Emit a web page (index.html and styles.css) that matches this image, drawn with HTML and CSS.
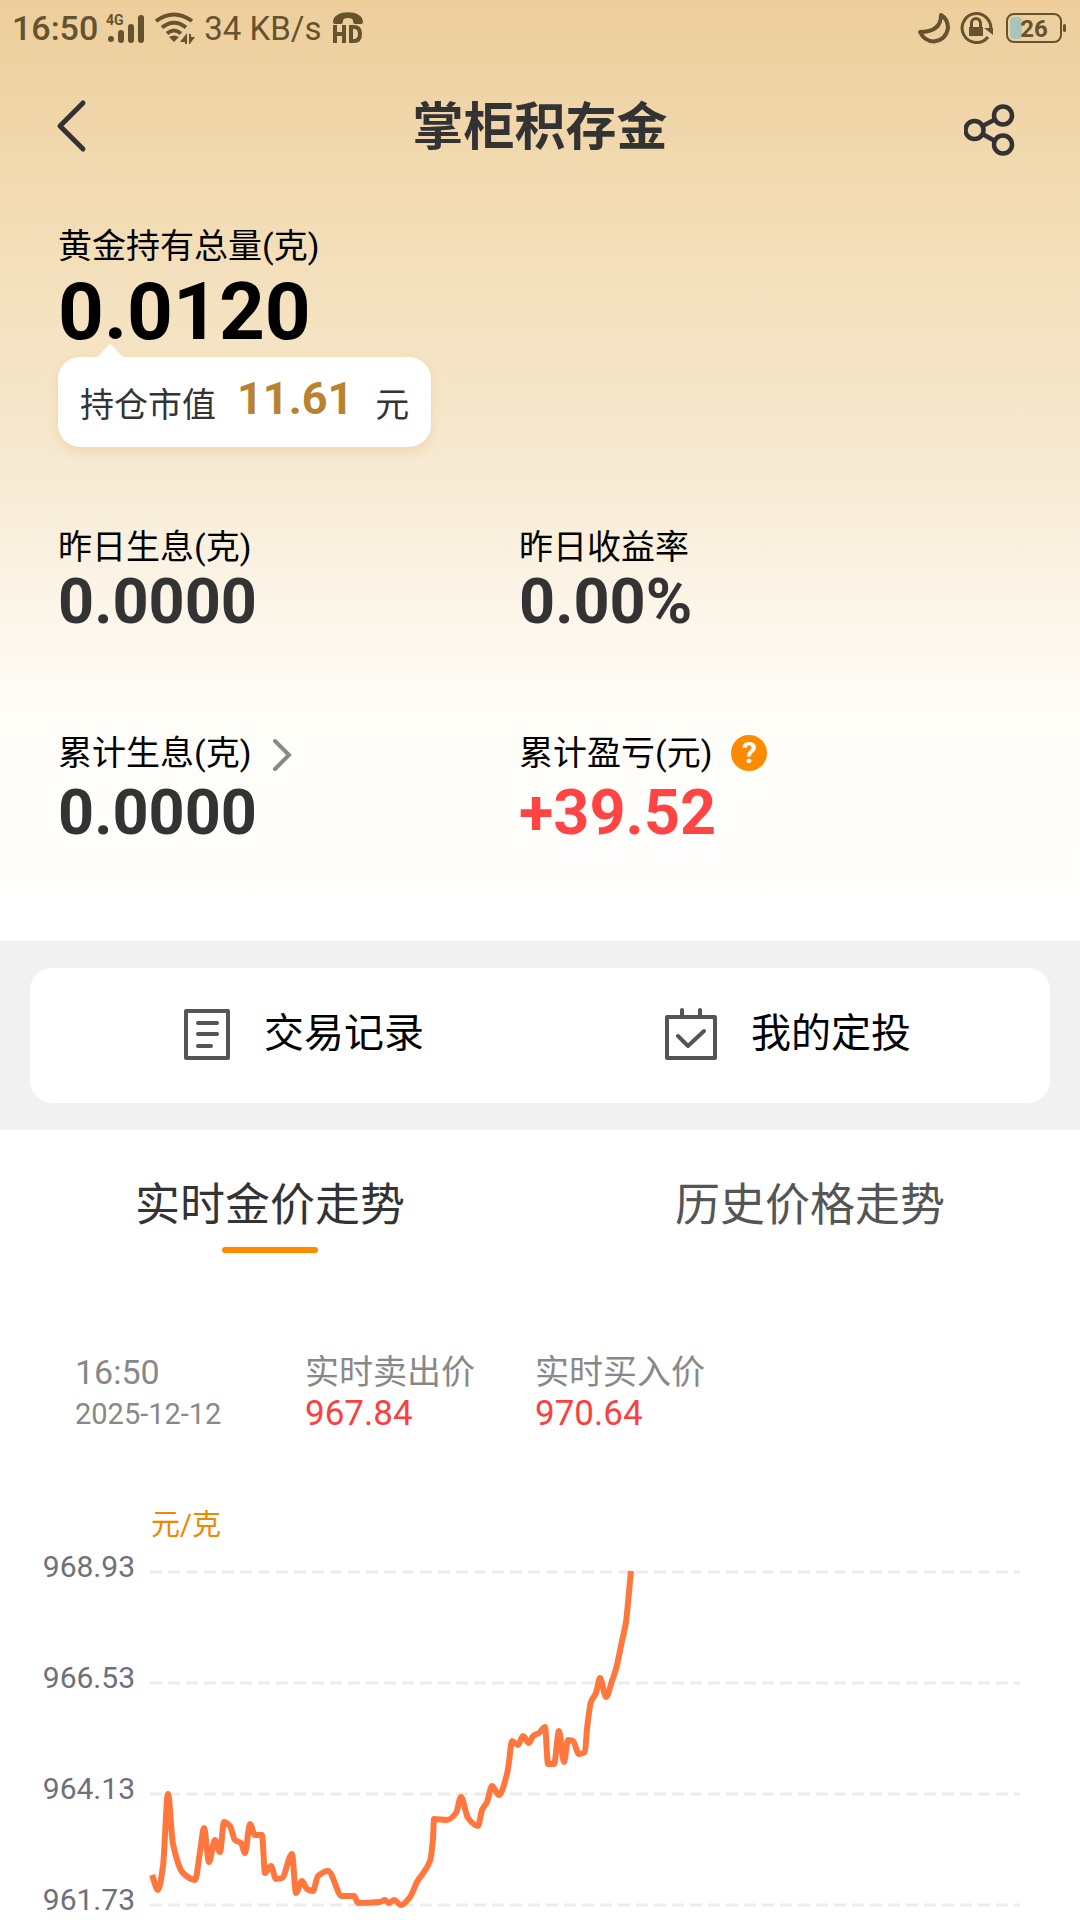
FILE: index.html
```html
<!DOCTYPE html>
<html lang="zh-CN">
<head>
  <meta charset="UTF-8">
  <meta name="viewport" content="width=device-width, initial-scale=1">
  <title>掌柜积存金</title>
  <link rel="stylesheet" href="styles.css">
</head>
<body>

  <div class="hero">
    <!-- Phone status bar -->
    <div class="status-bar">
      <span class="status-time">16:50</span>
      <svg class="signal-icon" width="40" height="32" viewBox="0 0 40 32">
        <text x="0" y="13" class="net-type">4G</text>
        <g fill="#65522f">
          <circle cx="5" cy="27" r="3"/>
          <rect x="12" y="18" width="6" height="13" rx="3"/>
          <rect x="22" y="12" width="6" height="19" rx="3"/>
          <rect x="32" y="3" width="6" height="28" rx="3"/>
        </g>
      </svg>
      <svg class="wifi-icon" width="42" height="32" viewBox="0 0 42 32" fill="none" stroke="#65522f" stroke-width="4">
        <path d="M2 9Q20 -4 38 9"/>
        <path d="M8 15.500Q20 6 32 15.500"/>
        <path d="M13 21.500Q20 15.500 27 21.500"/>
        <path d="M15 25Q20 22 25 25L20 30Z" fill="#65522f" stroke="none"/>
        <path d="M26 30L33 21V33H31V30ZM35 22V33L41 25H37V22Z" fill="#65522f" stroke="none"/>
      </svg>
      <span class="status-speed">34 KB/s</span>
      <svg class="hd-icon" width="32" height="34" viewBox="0 0 32 34">
        <path d="M1 11C1 -2 31 -2 31 11Q31 13 29 13H23Q21 13 21 10Q21 7 16 7T11 10Q11 13 9 13H3Q1 13 1 11Z" fill="#65522f"/>
        <path d="M3 14V32M12 14V32M3 23H12M19 16H22Q28 16 28 23T22 30H19Z" fill="none" stroke="#65522f" stroke-width="4"/>
      </svg>
      <div class="status-right">
        <svg width="34" height="32" viewBox="0 0 34 32" fill="none" stroke="#65522f" stroke-width="4" stroke-linejoin="round">
          <path d="M25 3Q32 7 32 16Q30 28 18 29.500Q8 29 4 20Q25 20 25 3Z"/>
        </svg>
        <svg width="34" height="34" viewBox="0 0 34 34" fill="none" stroke="#65522f" stroke-width="3">
          <path d="M30.500 20A14.500 14.500 0 0 0 16 2.500A14.500 14.500 0 1 0 28 26"/>
          <path d="M24 17H33V24Z" fill="#65522f" stroke="none"/>
          <rect x="9" y="16" width="14" height="9" fill="#65522f" stroke="none"/>
          <path d="M11.500 17V12A4.500 4.500 0 0 1 20.500 12V17"/>
        </svg>
        <span class="battery"><span class="battery-level"></span><span class="battery-text">26</span></span>
      </div>
    </div>

    <!-- Title bar -->
    <header class="title-bar">
      <button class="icon-btn" aria-label="返回">
        <svg width="32" height="54" viewBox="0 0 32 54" fill="none" stroke="#333" stroke-width="5" stroke-linecap="round" stroke-linejoin="round">
          <path d="M27 4L4 27L27 50"/>
        </svg>
      </button>
      <h1>掌柜积存金</h1>
      <button class="icon-btn" aria-label="分享">
        <svg width="52" height="60" viewBox="0 -8 52 60" fill="none" stroke="#333" stroke-width="4.500">
          <circle cx="10.500" cy="26" r="9"/>
          <circle cx="39" cy="11.500" r="9"/>
          <circle cx="39" cy="40.500" r="9"/>
          <path d="M18.500 22L31 15.500M18.500 30L31 37"/>
        </svg>
      </button>
    </header>

    <section class="holdings">
      <p class="label">黄金持有总量(克)</p>
      <p class="total">0.0120</p>
      <p class="market-value">持仓市值<strong>11.61</strong>元</p>

      <div class="stats">
        <div class="stat">
          <p class="label">昨日生息(克)</p>
          <p class="value">0.0000</p>
        </div>
        <div class="stat">
          <p class="label">昨日收益率</p>
          <p class="value">0.00%</p>
        </div>
      </div>
      <div class="stats stats-total">
        <div class="stat">
          <a href="#" class="label">累计生息(克)
            <svg class="more-icon" width="20" height="38" viewBox="0 -4 20 38" fill="none" stroke="#888" stroke-width="4" stroke-linecap="round">
              <path d="M3 3L17 17L3 31"/>
            </svg>
          </a>
          <p class="value">0.0000</p>
        </div>
        <div class="stat">
          <p class="label">累计盈亏(元)
            <button class="help-btn" aria-label="说明">?</button>
          </p>
          <p class="value up">+39.52</p>
        </div>
      </div>
    </section>
  </div>

  <nav class="shortcuts">
    <div class="shortcut-card">
      <a href="#">
        <svg width="46" height="52" viewBox="0 0 46 52" fill="none" stroke="#555" stroke-width="4" stroke-linecap="round" stroke-linejoin="round">
          <rect x="2" y="3" width="42" height="47"/>
          <path d="M14 15H33M14 26H33M14 38H27"/>
        </svg>
        <span>交易记录</span>
      </a>
      <a href="#">
        <svg width="52" height="52" viewBox="0 0 52 52" fill="none" stroke="#555" stroke-width="4" stroke-linecap="round" stroke-linejoin="round">
          <rect x="2" y="9" width="48" height="41"/>
          <path d="M17 2V9M35 2V9M13 28L23 38L39 23"/>
        </svg>
        <span>我的定投</span>
      </a>
    </div>
  </nav>

  <main>
    <div class="tabs" role="tablist">
      <button class="tab active" role="tab" aria-selected="true">实时金价走势</button>
      <button class="tab" role="tab" aria-selected="false">历史价格走势</button>
    </div>

    <div class="quotes">
      <div>
        <p class="quote-title">16:50</p>
        <p class="quote-date">2025-12-12</p>
      </div>
      <div>
        <p class="quote-title">实时卖出价</p>
        <p class="quote-price">967.84</p>
      </div>
      <div>
        <p class="quote-title">实时买入价</p>
        <p class="quote-price">970.64</p>
      </div>
    </div>

    <p class="unit">元/克</p>
    <svg class="chart" viewBox="0 0 1080 370">
      <g class="grid">
        <path d="M150 23H1020"/>
        <path d="M150 134H1020"/>
        <path d="M150 245H1020"/>
        <path d="M150 356H1020"/>
      </g>
      <g class="axis">
        <text x="135" y="28">968.93</text>
        <text x="135" y="139">966.53</text>
        <text x="135" y="250">964.13</text>
        <text x="135" y="361">961.73</text>
      </g>
      <path id="price-line" class="price-line"/>
    </svg>
  </main>

  <script src="script.js"></script>
</body>
</html>
```
FILE: styles.css
```css
* {
  box-sizing: border-box;
}

body {
  margin: 0;
  font-family: Roboto, "Noto Sans CJK SC", sans-serif;
  font-size: 34px;
  color: #000;
  background: #fff;
}

p, h1 {
  margin: 0;
}

a {
  color: inherit;
  text-decoration: none;
}

button {
  padding: 0;
  border: none;
  background: none;
  font-family: inherit;
  cursor: pointer;
}

svg {
  display: block;
  flex: none;
}

.hero {
  padding-bottom: 97px;
  background: linear-gradient(#edce9b 0%, #f3deb8 26%, #f7ead3 50%, #fdf8ee 68%, #fffdf8 76%, #fff 100%);
}

/* Status bar */
.status-bar {
  display: flex;
  align-items: center;
  height: 56px;
  padding: 0 14px 0 12px;
  color: #65522f;
}

.status-time {
  font-size: 34px;
  font-weight: 500;
  margin-right: 8px;
}

.net-type {
  font-size: 14px;
  font-weight: 700;
  fill: #65522f;
}

.wifi-icon {
  margin-left: 8px;
}

.status-speed {
  font-size: 33px;
  margin: 0 11px 0 8px;
}

.status-right {
  display: flex;
  align-items: center;
  gap: 10px;
  margin-left: auto;
}

.battery {
  position: relative;
  width: 56px;
  height: 30px;
  margin: 0 4px 0 2px;
  border: 2px solid #65522f;
  border-radius: 8px;
  font-size: 24px;
  font-weight: 700;
  line-height: 28px;
  text-align: center;
}

.battery::after {
  content: "";
  position: absolute;
  top: 9px;
  right: -6px;
  width: 3px;
  height: 8px;
  border-radius: 2px;
  background: #65522f;
}

.battery-level {
  position: absolute;
  top: 2px;
  left: 2px;
  width: 12px;
  height: 22px;
  border-radius: 4px;
  background: #a9c4bd;
}

.battery-text {
  position: relative;
}

/* Title bar */
.title-bar {
  display: flex;
  align-items: center;
  justify-content: space-between;
  height: 140px;
  padding: 0 56px;
}

.title-bar h1 {
  padding-bottom: 6px;
  font-size: 51px;
  font-weight: 700;
  color: #333;
}

.icon-btn {
  display: flex;
  align-items: center;
  width: 60px;
  height: 60px;
}

/* Holdings */
.holdings {
  padding: 26px 58px 0;
}

.label {
  display: flex;
  align-items: center;
  height: 48px;
  line-height: 48px;
}

.total {
  font-size: 80px;
  font-weight: 700;
  line-height: 84px;
}

.market-value {
  position: relative;
  display: flex;
  align-items: center;
  width: max-content;
  height: 90px;
  margin-top: 3px;
  padding: 0 22px;
  border-radius: 22px;
  color: #333;
  background: #fff;
  box-shadow: 0 4px 12px rgba(220, 170, 90, 0.3);
}

.market-value::before {
  content: "";
  position: absolute;
  top: -13px;
  left: 38px;
  border: 14px solid transparent;
  border-top: 0;
  border-bottom-color: #fff;
}

.market-value strong {
  margin: 0 22px 8px 21px;
  font-size: 45px;
  color: #b88230;
}

.stats {
  display: grid;
  grid-template-columns: 461px 1fr;
  margin-top: 76px;
}

.stats-total {
  margin-top: 96px;
}

.value {
  font-size: 63px;
  font-weight: 700;
  line-height: 62px;
  color: #333;
}

.stats-total .value {
  margin-top: 5px;
}

.value.up {
  color: #ff4444;
}

.more-icon {
  margin-left: 21px;
}

.help-btn {
  width: 36px;
  height: 36px;
  margin-left: 19px;
  border-radius: 50%;
  font-size: 30px;
  font-weight: 700;
  line-height: 36px;
  color: #fff;
  background: #ff8a00;
}

/* Shortcuts */
.shortcuts {
  padding: 27px 30px;
  background: #f1f1f1;
}

.shortcut-card {
  display: flex;
  height: 135px;
  padding: 0 20px 4px 32px;
  border-radius: 22px;
  background: #fff;
}

.shortcut-card a {
  flex: 1;
  display: flex;
  align-items: center;
  justify-content: center;
  gap: 34px;
  font-size: 40px;
}

.shortcut-card span {
  padding-bottom: 8px;
}

/* Price trend */
.tabs {
  display: flex;
}

.tab {
  position: relative;
  flex: 1;
  height: 123px;
  padding-top: 20px;
  font-size: 45px;
  color: #555;
}

.tab.active {
  color: #333;
}

.tab.active::after {
  content: "";
  position: absolute;
  bottom: 0;
  left: 50%;
  width: 96px;
  height: 6px;
  margin-left: -48px;
  border-radius: 3px;
  background: #ff8a00;
}

.quotes {
  display: grid;
  grid-template-columns: 230px 230px 1fr;
  padding: 98px 75px 0;
  color: #888;
}

.quote-title,
.quote-date,
.quote-price {
  line-height: 42px;
}

.quote-date {
  font-size: 29px;
}

.quote-price {
  font-size: 35px;
  color: #f94141;
}

.unit {
  margin-top: 70px;
  padding-left: 151px;
  font-size: 29px;
  line-height: 40px;
  color: #ee8900;
}

.chart {
  width: 100%;
  margin-top: 4px;
}

.grid path {
  stroke: #ececec;
  stroke-width: 3;
  stroke-dasharray: 12 6;
}

.axis text {
  font-size: 30px;
  text-anchor: end;
  fill: #6e7079;
}

.price-line {
  fill: none;
  stroke: #ff773d;
  stroke-width: 6;
  stroke-linejoin: round;
}
```
FILE: script.js
```js
// Price line points in chart coordinates
const points = [
  [152, 326], [158, 341], [163, 317], [168, 245], [173, 295], [183, 324], [195, 331],
  [200, 303], [204, 279], [209, 313], [215, 291], [220, 303], [224, 273], [230, 277],
  [235, 291], [241, 294], [245, 304], [250, 275], [255, 286], [262, 286], [265, 324],
  [271, 317], [276, 330], [282, 329], [292, 305], [296, 344], [302, 332], [307, 340],
  [313, 342], [318, 327], [328, 322], [342, 347], [354, 347], [358, 354], [380, 353],
  [385, 351], [389, 354], [394, 351], [401, 356], [410, 348], [417, 333], [430, 312],
  [433, 290], [434, 270], [447, 271], [456, 264], [461, 248], [468, 269], [478, 277],
  [482, 261], [487, 253], [492, 237], [499, 246], [507, 225], [509, 213], [512, 192],
  [518, 196], [523, 187], [529, 194], [533, 187], [539, 184], [545, 178], [548, 215],
  [554, 215], [559, 182], [564, 213], [568, 191], [573, 192], [579, 205], [585, 203],
  [587, 180], [591, 153], [596, 144], [600, 129], [606, 148], [612, 132], [616, 120],
  [622, 92], [626, 73], [629, 43], [631, 22]
];

function slope(a, b) {
  return (b[1] - a[1]) / (b[0] - a[0]);
}

// Flat at peaks and dips, averaged everywhere else
function tangent(i) {
  if (i === 0) return slope(points[0], points[1]);
  if (i === points.length - 1) return slope(points[i - 1], points[i]);
  const before = slope(points[i - 1], points[i]);
  const after = slope(points[i], points[i + 1]);
  if (before * after <= 0) return 0;
  return 2 * before * after / (before + after);
}

let d = "M" + points[0].join(" ");
for (let i = 1; i < points.length; i++) {
  const [x0, y0] = points[i - 1];
  const [x1, y1] = points[i];
  const step = (x1 - x0) / 3;
  d += ` C${x0 + step} ${y0 + step * tangent(i - 1)} ${x1 - step} ${y1 - step * tangent(i)} ${x1} ${y1}`;
}
document.getElementById("price-line").setAttribute("d", d);
```
